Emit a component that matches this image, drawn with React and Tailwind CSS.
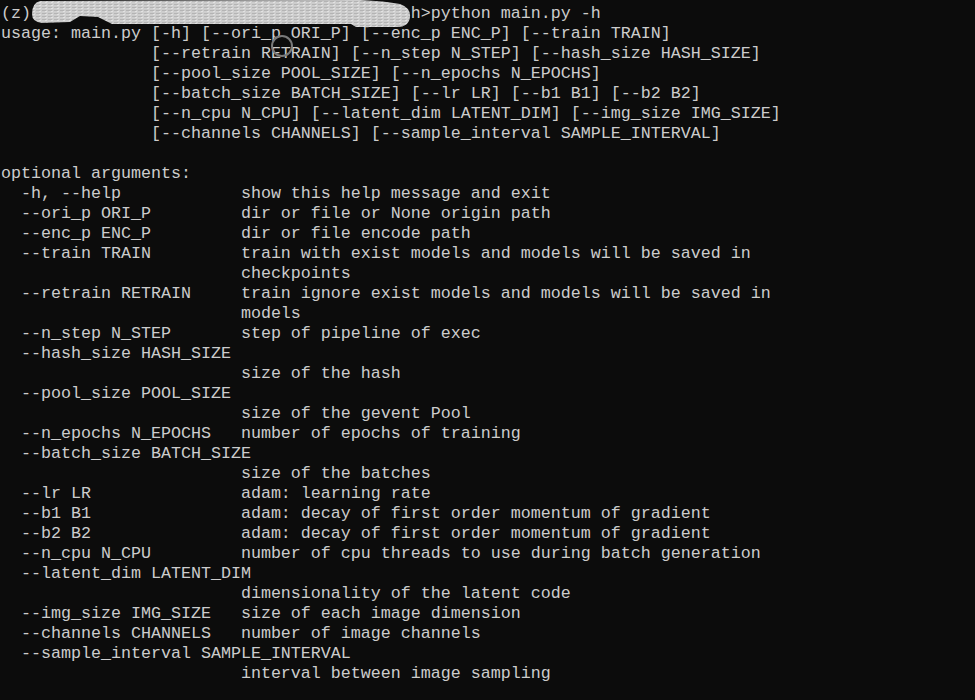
import React from 'react';

const lines = [
  '(z)                                      h>python main.py -h',
  'usage: main.py [-h] [--ori_p ORI_P] [--enc_p ENC_P] [--train TRAIN]',
  '               [--retrain RETRAIN] [--n_step N_STEP] [--hash_size HASH_SIZE]',
  '               [--pool_size POOL_SIZE] [--n_epochs N_EPOCHS]',
  '               [--batch_size BATCH_SIZE] [--lr LR] [--b1 B1] [--b2 B2]',
  '               [--n_cpu N_CPU] [--latent_dim LATENT_DIM] [--img_size IMG_SIZE]',
  '               [--channels CHANNELS] [--sample_interval SAMPLE_INTERVAL]',
  '',
  'optional arguments:',
  '  -h, --help            show this help message and exit',
  '  --ori_p ORI_P         dir or file or None origin path',
  '  --enc_p ENC_P         dir or file encode path',
  '  --train TRAIN         train with exist models and models will be saved in',
  '                        checkpoints',
  '  --retrain RETRAIN     train ignore exist models and models will be saved in',
  '                        models',
  '  --n_step N_STEP       step of pipeline of exec',
  '  --hash_size HASH_SIZE',
  '                        size of the hash',
  '  --pool_size POOL_SIZE',
  '                        size of the gevent Pool',
  '  --n_epochs N_EPOCHS   number of epochs of training',
  '  --batch_size BATCH_SIZE',
  '                        size of the batches',
  '  --lr LR               adam: learning rate',
  '  --b1 B1               adam: decay of first order momentum of gradient',
  '  --b2 B2               adam: decay of first order momentum of gradient',
  '  --n_cpu N_CPU         number of cpu threads to use during batch generation',
  '  --latent_dim LATENT_DIM',
  '                        dimensionality of the latent code',
  '  --img_size IMG_SIZE   size of each image dimension',
  '  --channels CHANNELS   number of image channels',
  '  --sample_interval SAMPLE_INTERVAL',
  '                        interval between image sampling',
];

// the hand-drawn blot that hides the path in the prompt
const Scribble = () => (
  <svg className="absolute left-0 top-0" width="420" height="32" viewBox="0 0 420 32">
    <defs>
      <pattern id="grain" width="6" height="3" patternUnits="userSpaceOnUse">
        <rect width="6" height="3" fill="#cdcdcd" />
        <rect y="1" width="4" height="1" fill="#b4b4b4" />
        <rect x="3" y="2" width="2" height="1" fill="#e2e2e2" />
      </pattern>
    </defs>
    <path
      d="M40 1 L360 0 Q385 1 400 4 Q411 8 410 17 Q409 27 397 27 L356 27 L351 24 L112 24 L98 17 L80 16 L70 22 L42 23 Q32 22 32 14 Q32 3 40 1 Z"
      fill="url(#grain)"
    />
  </svg>
);

export default function App() {
  return (
    <div className="relative h-[700px] w-[975px] overflow-hidden bg-[#0c0c0c]">
      <pre className="pl-[1px] pt-[4px] font-['Liberation_Mono',monospace] text-[16.67px] leading-[20px] text-[#cccccc]">
        {lines.map((l, i) => (
          <div key={i} className="h-[20px] whitespace-pre">{l}</div>
        ))}
      </pre>
      <Scribble />
      <div className="absolute left-[271px] top-[35px] h-[22px] w-[22px] rounded-full border-2 border-[#7a7a7a]" />
    </div>
  );
}
